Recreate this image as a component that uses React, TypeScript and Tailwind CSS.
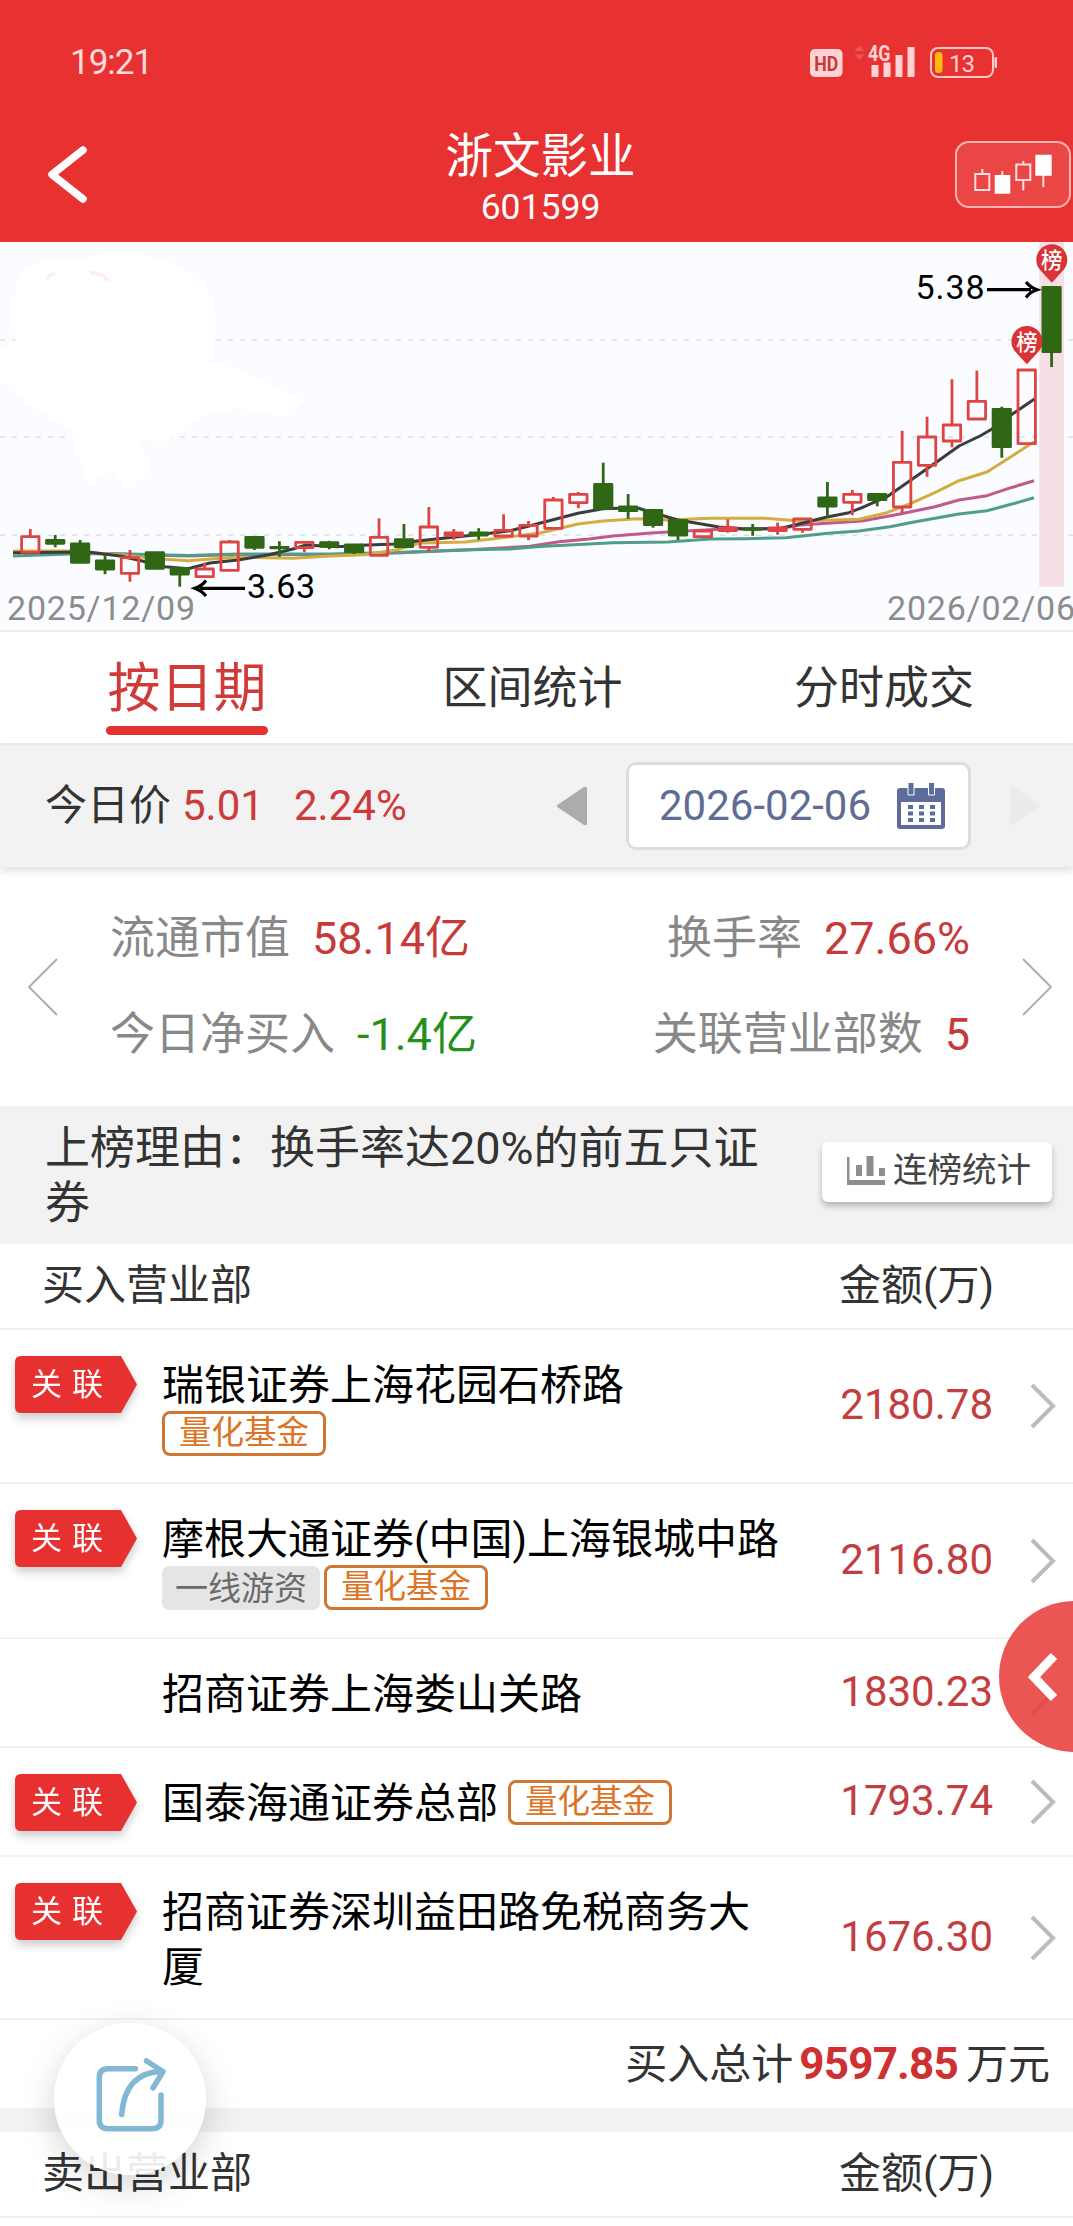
import type { ReactNode } from "react"

// [high, bodyTop, bodyBottom, low, rising]
const candles: [number, number, number, number, number][] = [
  [529, 536.7, 552.3, 552.3, 1], [535, 539.5, 544.3, 547.3, 0], [540, 543, 563.3, 563.3, 0],
  [555.3, 560, 570, 574.3, 0], [550, 557.7, 573.3, 581.7, 1], [551.7, 551.7, 569.3, 569.3, 0],
  [567.3, 567.3, 575, 586.7, 0], [562.7, 569, 576.7, 576.7, 1], [540, 542, 570.3, 570.3, 1],
  [536.3, 536.3, 548.3, 550, 0], [541.3, 546.3, 548.7, 556.7, 0], [542.3, 542.3, 547.7, 552.3, 1],
  [540.7, 541.7, 547.3, 549.3, 0], [544, 544, 552.7, 554, 0], [518.3, 537.3, 555.3, 555.3, 1],
  [524, 538.7, 547.7, 547.7, 0], [507, 527, 547.3, 551.7, 1], [529, 533, 535.5, 539.7, 1],
  [528.3, 532, 536, 539.7, 0], [514.3, 530.3, 536, 536, 1], [521, 525.3, 536, 540.3, 1],
  [497, 500, 528.3, 528.3, 1], [492, 494.3, 502.7, 508.3, 1], [462.7, 483.3, 509.7, 509.7, 0],
  [494, 506, 511.7, 518.7, 0], [509.3, 509.3, 525.7, 527.7, 0], [519.3, 519.3, 536, 540, 0],
  [530, 531, 536.7, 536.7, 1], [519.3, 528, 530.5, 532.7, 1], [524, 527.8, 530.2, 535.7, 0],
  [522.7, 528, 530.5, 534.7, 1], [518.3, 518.8, 529.3, 532.7, 1], [482, 497, 507, 517, 0],
  [490, 494.3, 502.3, 515.3, 1], [493.3, 493.3, 500.7, 506.3, 0], [430.7, 462.3, 507, 513.3, 1],
  [416.7, 437, 465.3, 476.7, 1], [379.3, 425, 441, 447.3, 1], [370.7, 401.3, 419, 419, 1],
  [406.7, 408.3, 447.7, 457.7, 0], [370, 370, 443.7, 443.7, 1], [286.3, 286.3, 352.7, 367, 0],
]

const averages = [
  { color: "#c05a8c", points: "13,552 69,552.5 110,554 188,556 238,554.5 331,554.5 396,553 465,550 530,546.3 559,541.7 589,539 613,536 651,533 686,531 724,529 779,528.7 800,525 835,522.7 862,521 900,514 935,506.7 959,500 987,495.7 1011,487.7 1034,480.7" },
  { color: "#4f9d8b", points: "13,556 69,554 110,553.5 188,555.5 238,554 331,554 396,552.5 460,550 510,549 540,546.5 613,542.7 668,542 710,539 745,538.7 786,537.7 828,533.3 859,531 890,526.7 914,522 959,514 987,510.7 1015,503.3 1034,497.7" },
  { color: "#d3ad3f", points: "13,551 69,551 110,554 158,558.7 188,560.7 238,557 293,558.3 331,556 365,554.7 396,550 420,543 465,542 492,539 540,533 578,524 603,521 637,518.7 668,520 710,518.3 765,518.3 800,521 859,519.3 887,512.7 911,503.3 937,491.7 959,480.7 987,472 1011,456.7 1034,441.7" },
  { color: "#3c3c3f", points: "13,552.7 88,552 120,556 138,560 165,566.7 188,568.7 210,563 238,560 269,554.7 293,549 306,545 337,546.7 368,545 396,544 417,541 448,537.7 482,534.3 510,530.7 530,525.7 578,513.3 603,508.7 637,507.7 653,512.7 678,520 719,527 745,529 779,528.7 802,523.3 827,517 849,512.7 862,507.7 887,496.7 911,480 937,461.7 959,446 980,436 992,429 1011,415 1034.5,399" },
]

const buyers = [
  { name: "瑞银证券上海花园石桥路", amount: "2180.78", linked: true, tags: ["量化基金"], height: "h-[154px]" },
  { name: "摩根大通证券(中国)上海银城中路", amount: "2116.80", linked: true, tags: ["一线游资", "量化基金"], height: "h-[155px]" },
  { name: "招商证券上海娄山关路", amount: "1830.23", linked: false, tags: [], height: "h-[109px]" },
  { name: "国泰海通证券总部", amount: "1793.74", linked: true, tags: ["量化基金"], inline: true, height: "h-[109px]" },
  { name: "招商证券深圳益田路免税商务大厦", amount: "1676.30", linked: true, tags: [], height: "h-[163px]" },
]

function StatusBar() {
  return (
    <div className="flex h-[124px] items-center justify-between pl-[70px] pr-[76px]">
      <span className="text-[35px] leading-none tracking-[-1px] text-[#ffdada]">19:21</span>
      <svg width="187" height="44" viewBox="810 40 187 44" fill="#ffd3d3">
        <rect x="810" y="49" width="32.5" height="28" rx="5" />
        <text x="826.3" y="70.500" textAnchor="middle" textLength="24" lengthAdjust="spacingAndGlyphs" fontSize="21" fontWeight="700" fill="#c9393a">HD</text>
        <path d="M854.5 51l5-5.500 5 5.500zM854.500 54.500l5 5.500 5-5.500z" fill="#ee5353" />
        <text x="868" y="61" textLength="22.500" lengthAdjust="spacingAndGlyphs" fontSize="21.500" fontWeight="700">4G</text>
        <path d="M871.500 65h7v12h-7zM883.500 62.500h7v14.500h-7zM895.500 55h7v22h-7zM907.500 47h7v30h-7z" />
        <rect x="931" y="48" width="62" height="29" rx="7" fill="none" stroke="#ffc4c4" strokeWidth="2" />
        <rect x="935" y="52" width="7.500" height="21" rx="3.500" fill="#fdb913" />
        <text x="961.500" y="71.500" textAnchor="middle" fontSize="24" letterSpacing="-1">13</text>
        <rect x="994.500" y="57" width="2.500" height="11" rx="1" />
      </svg>
    </div>
  )
}

function Header() {
  return (
    <header className="h-[242px] bg-[#e83131] text-white">
      <StatusBar />
      <div className="flex h-[118px] justify-between pl-[47px] pr-[2px]">
        <svg className="mt-[20px]" width="42" height="60" viewBox="47 144 42 60" fill="none" stroke="#fff" strokeWidth="7.500" strokeLinecap="round" strokeLinejoin="round">
          <path d="M83 150L52 174.500L83 199" />
        </svg>
        <div className="flex flex-col items-center pl-[37px]">
          <h1 className="mt-[8px] text-[47.500px] leading-[50px]">浙文影业</h1>
          <span className="mt-[6px] text-[35.500px] leading-[38px]">601599</span>
        </div>
        <svg className="mt-[17px]" width="116" height="67" viewBox="955 141 116 67" fill="none" stroke="#fff" strokeWidth="2">
          <rect x="956" y="142" width="114" height="65" rx="13" fill="#fff" fillOpacity="0.1" stroke="#ffb4b4" />
          <path stroke="#ffdede" d="M975.300 174h14v16h-14zM982.300 169v5M1002.300 171v5M1016.300 164.500h14v15.500h-14zM1023.300 161v3M1023.300 180.500v10M1043.300 175v12" />
          <path fill="#fff" stroke="none" d="M994.700 175h15.600v18.700h-15.600zM1035.300 154.700h16.400v21h-16.400z" />
        </svg>
      </div>
    </header>
  )
}

function Pin({ x, y }: { x: number; y: number }) {
  return (
    <g>
      <path d={`M${x} ${y + 22}L${x - 11} ${y + 10}A15.500 15.500 0 1 1 ${x + 11} ${y + 10}Z`} fill="#d93335" />
      <text x={x} y={y + 7.5} textAnchor="middle" fontSize="21.500" fontWeight="500" fill="#fff">榜</text>
    </g>
  )
}

function KLineChart() {
  return (
    <section className="h-[390px] border-b-2 border-[#eee] bg-[#fbfcff]">
      <svg width="1073" height="388" viewBox="0 242 1073 388">
        <g stroke="#dfe0e5" strokeWidth="1.500" strokeDasharray="5 7">
          <path d="M0 339.700H1073M0 437H1073M0 535.300H1073" />
        </g>
        <path
          d="M20 275Q35 262 60 258L80 260Q110 248 150 256Q190 266 207 290Q218 310 214 340L208 362L240 370L303 400L285 416L235 408L195 418Q180 432 165 442L140 440L150 470L128 491L112 470L88 486L70 430Q35 410 0 380V350L18 338Q5 320 20 275Z"
          fill="#fff"
        />
        <path d="M47 280q2-6 8-6M90 273q14 0 18 8" stroke="#fdf0ef" strokeWidth="4" fill="none" />
        <rect x="1039.300" y="242" width="24.700" height="344.700" fill="#f7e0e5" />
        {averages.map((line) => (
          <polyline key={line.color} points={line.points} fill="none" stroke={line.color} strokeWidth="3" strokeLinejoin="round" />
        ))}
        {candles.map(([high, top, bottom, low, rising], i) => {
          const x = 30.3 + i * 24.91
          const color = rising ? "#dd4444" : "#2f6715"
          return (
            <g key={i} stroke={color} strokeWidth="2.800">
              <path d={`M${x} ${high}V${top}M${x} ${bottom}V${low}`} />
              <rect
                x={x - 8.7}
                y={rising ? top : top + 1}
                width="17.400"
                height={Math.max(rising ? bottom - top : bottom - top - 2, 0.5)}
                fill={rising ? "none" : color}
                strokeLinejoin="round"
              />
            </g>
          )
        })}
        <Pin x={1051.8} y={260.7} />
        <Pin x={1026.9} y={342.3} />
        <g fontSize="34">
          <text x="247" y="598" textLength="68">3.63</text>
          <text x="915.500" y="299" textLength="69">5.38</text>
          <g fill="#8c8c8c">
            <text x="7" y="619.500" textLength="188">2025/12/09</text>
            <text x="887" y="619.500" textLength="188">2026/02/06</text>
          </g>
        </g>
        <path d="M200 588.300H245M206 580.500Q202 586 195 588.300Q202 591 206 596M987 289.700H1031M1026 281.900Q1030 287 1037 289.700Q1030 292 1026 297.500" fill="none" stroke="#000" strokeWidth="3.200" />
      </svg>
    </section>
  )
}

function Tabs() {
  return (
    <nav className="flex h-[113px] items-start justify-between border-b-2 border-[#ececec] pl-[106px] pr-[99px] text-[45px] leading-[60px] text-[#333]">
      <div className="flex flex-col items-center">
        <span className="mt-[27px] w-[162px] text-center text-[53px] text-[#d13a38]">按日期</span>
        <span className="mt-[7px] h-[9px] w-[162px] rounded-full bg-[#e23331]" />
      </div>
      <span className="mt-[27px] pl-[3px]">区间统计</span>
      <span className="mt-[27px]">分时成交</span>
    </nav>
  )
}

function PriceBar() {
  return (
    <section className="flex h-[122px] items-center bg-[#f2f2f2] pl-[45px] text-[42px] leading-none text-[#cc3a3b] shadow-[0_4px_7px_rgba(0,0,0,0.12)]">
      <span className="text-[#333]">今日价</span>
      <span className="ml-[11px] w-[112px]">5.01</span>
      <span className="w-[262px]">2.24%</span>
      <svg width="32" height="42" viewBox="0 0 32 42" fill="#acacac">
        <path d="M31 3v36q0 2-3 1L2 22.500q-2-1.500 0-3L28 2q3-1 3 1z" />
      </svg>
      <div className="ml-[38px] flex h-[88px] w-[345px] items-center rounded-[10px] border-[3px] border-[#ddd] bg-white pl-[30px] text-[#5f6d94]">
        <span className="w-[238px]">2026-02-06</span>
        <svg width="48" height="46" viewBox="0 0 48 46" fill="#5c6c9c">
          <path fillRule="evenodd" d="M3 5H45Q48 5 48 8V43Q48 46 45 46H3Q0 46 0 43V8Q0 5 3 5ZM4 19V42H44V19Z" />
          <path stroke="#fff" strokeWidth="1" d="M11 -1h6v13h-6zM31.500 -1h6v13h-6z" />
          <path d="M11 22h5v4h-5zM22 22h5v4h-5zM33 22h5v4h-5zM11 28.500h5v4h-5zM22 28.500h5v4h-5zM33 28.500h5v4h-5zM11 35h5v4h-5zM22 35h5v4h-5zM33 35h5v4h-5z" />
        </svg>
      </div>
      <svg className="ml-[38px]" width="32" height="42" viewBox="0 0 32 42" fill="#ebebeb">
        <path d="M1 3v36q0 2 3 1L30 22.500q2-1.500 0-3L4 2q-3-1-3 1z" />
      </svg>
    </section>
  )
}

function Stat({ label, value, color }: { label: string; value: string; color: string }) {
  return (
    <div className="flex gap-[22px]">
      <span className="text-[#888]">{label}</span>
      <span className={color}>{value}</span>
    </div>
  )
}

function Stats() {
  return (
    <section className="flex h-[239px] items-center justify-between px-[21px] text-[45px] leading-[60px]">
      <svg width="37" height="60" viewBox="0 0 37 60" fill="none" stroke="#aaa" strokeWidth="1.800">
        <path d="M36 2L8 30L36 58" />
      </svg>
      <div className="flex grow justify-between pl-[52px] pr-[52px]">
        <div className="flex flex-col gap-[36px]">
          <Stat label="流通市值" value="58.14亿" color="text-[#c63a39]" />
          <Stat label="今日净买入" value="-1.4亿" color="text-[#23901a]" />
        </div>
        <div className="flex flex-col items-end gap-[36px]">
          <Stat label="换手率" value="27.66%" color="text-[#c63a39]" />
          <Stat label="关联营业部数" value="5" color="text-[#c63a39]" />
        </div>
      </div>
      <svg width="30" height="60" viewBox="0 0 30 60" fill="none" stroke="#aaa" strokeWidth="1.800">
        <path d="M1 2L29 30L1 58" />
      </svg>
    </section>
  )
}

function Reason() {
  return (
    <section className="flex h-[138px] items-start justify-between bg-[#f2f2f2] pl-[45px] pr-[21px] pt-[16px] text-[#333]">
      <p className="w-[730px] text-[45px] leading-[54.500px]">上榜理由：换手率达20%的前五只证券</p>
      <button className="mt-[20px] flex h-[60px] w-[230px] items-center rounded-[6px] bg-white pb-[3px] pl-[25px] text-[34.500px] leading-none text-[#444] shadow-[0_4px_6px_rgba(0,0,0,0.25)]">
        <svg className="mr-[8px]" width="38" height="29" viewBox="0 0 38 29" fill="#8e8e8e">
          <path d="M0 1h2.500v23H38v5H0zM9 9h6v11H9zM19.500 0h7v20h-7zM32 12h6v8h-6z" />
        </svg>
        连榜统计
      </button>
    </section>
  )
}

function TableHead({ title }: { title: string }) {
  return (
    <div className="flex h-[86px] items-center justify-between border-b-2 border-[#f2f2f2] pb-[2px] pl-[42px] pr-[79px] text-[42px] leading-[55px] text-[#333]">
      <span>{title}</span>
      <span>金额(万)</span>
    </div>
  )
}

function Tag({ children }: { children: ReactNode }) {
  if (children === "一线游资") {
    return <span className="mt-px flex h-[44px] items-center rounded-[7px] bg-[#e5e5e5] px-[13px] text-[33px] leading-none text-[#6b6b6b]">{children}</span>
  }
  return <span className="flex h-[45px] items-center rounded-[8px] border-[3px] border-[#cf7632] px-[14px] text-[32.500px] leading-none text-[#dc7428]">{children}</span>
}

function LinkedBadge() {
  return (
    <div className="relative h-[57px] w-[122px] text-[31px] leading-none text-white drop-shadow-[0_5px_5px_rgba(0,0,0,0.2)]">
      <svg width="122" height="57" viewBox="0 0 122 57">
        <path d="M6 0H106L122 28.500L106 57H6Q0 57 0 51V6Q0 0 6 0Z" fill="#e73131" />
      </svg>
      <span className="absolute left-[16px] top-[13px] tracking-[10px] whitespace-nowrap">关联</span>
    </div>
  )
}

function BuyerRow({ row }: { row: (typeof buyers)[number] }) {
  return (
    <div className={`flex border-b-2 border-[#f2f2f2] pl-[15px] pr-[16px] ${row.height}`}>
      <div className="w-[147px] shrink-0 pt-[26px]">{row.linked && <LinkedBadge />}</div>
      <div className={row.inline ? "flex w-[660px] items-start gap-[10px] pt-[28px]" : "w-[620px] pt-[28px]"}>
        <div className="text-[42px] leading-[55px] text-black">{row.name}</div>
        <div className={row.inline ? "flex pt-[4px]" : "-mt-[2px] flex gap-[4px]"}>
          {row.tags.map((tag) => (
            <Tag key={tag}>{tag}</Tag>
          ))}
        </div>
      </div>
      <div className="ml-auto flex items-center text-[42px] leading-none text-[#c23e40]">
        <span className="-mt-[2px]">{row.amount}</span>
        <svg className="ml-[37px]" width="27" height="48" viewBox="0 0 27 48" fill="none" stroke="#bcbcbc" strokeWidth="4">
          <path d="M2 3L23 24L2 45" />
        </svg>
      </div>
    </div>
  )
}

export default function App() {
  return (
    <main className="relative h-[2226px] w-[1073px] overflow-hidden bg-white font-[Roboto,'Noto_Sans_CJK_SC',sans-serif]">
      <Header />
      <KLineChart />
      <Tabs />
      <PriceBar />
      <Stats />
      <Reason />
      <TableHead title="买入营业部" />
      {buyers.map((row) => (
        <BuyerRow key={row.name} row={row} />
      ))}
      <div className="flex h-[88px] items-center justify-end pr-[23px] text-[42px] leading-[55px] text-[#333]">
        买入总计
        <b className="ml-[6px] mr-[8px] text-[44px] tracking-[-0.8px] text-[#cf3030]">9597.85</b>
        万元
      </div>
      <div className="h-[24px] bg-[#f2f2f2]" />
      <TableHead title="卖出营业部" />

      <button className="absolute left-[999px] top-[1601px] size-[151px] rounded-full bg-[#e83c3b]/87">
        <svg className="ml-[26px]" width="34" height="50" viewBox="0 0 34 50" fill="none" stroke="#fff" strokeWidth="9">
          <path d="M29 4L9 25L29 46" />
        </svg>
      </button>
      <button className="absolute left-[54px] top-[2023px] size-[152px] rounded-full bg-white/90 shadow-[0_10px_34px_rgba(0,0,0,0.17)]">
        <svg width="152" height="152" viewBox="54 2023 152 152" fill="none" stroke="#82b8d3" strokeWidth="5.500" strokeLinecap="round">
          <path d="M135.500 2068.700H108Q99.300 2068.700 99.300 2077.500V2120Q99.300 2128.700 108 2128.700H152.500Q161 2128.700 161 2120V2095" />
          <path d="M121.700 2114.500Q125 2072 162 2071.500M146.500 2061L163 2071.500L153 2088" strokeLinejoin="round" />
        </svg>
      </button>
    </main>
  )
}
